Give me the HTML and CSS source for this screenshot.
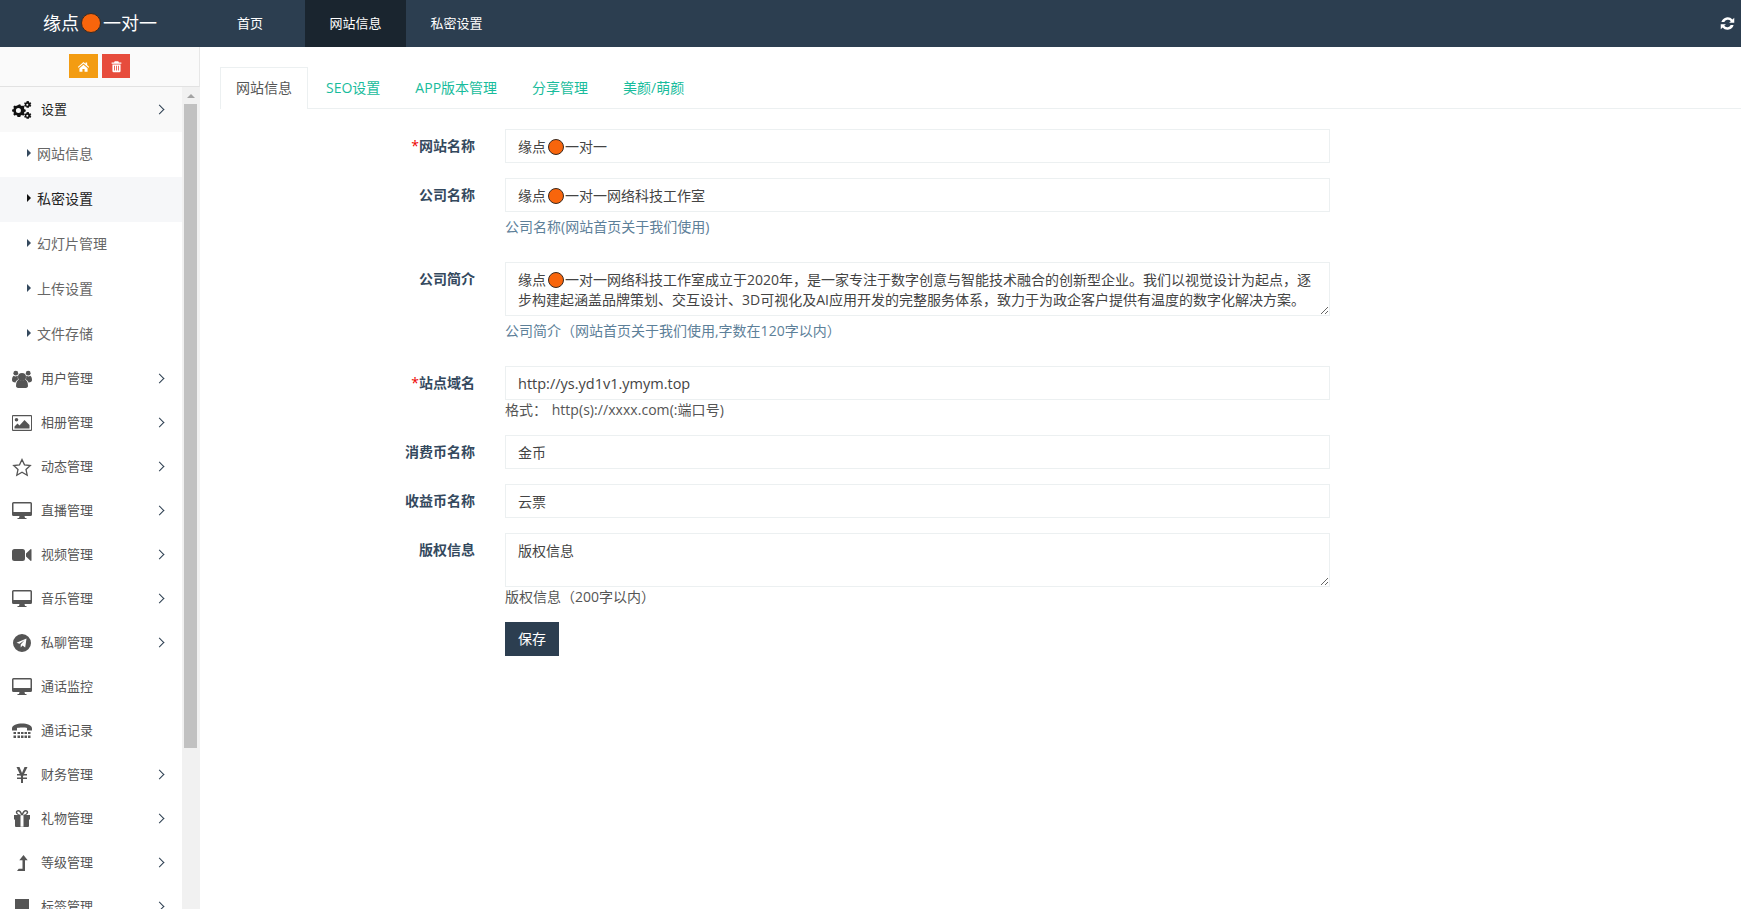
FILE: index.html
```html
<!DOCTYPE html>
<html lang="zh-CN">
<head>
<meta charset="utf-8">
<title>网站信息</title>
<link rel="stylesheet" href="styles.css">
</head>
<body>
<svg class="defs" aria-hidden="true">
  <defs>
    <symbol id="i-desktop" viewBox="0 0 20 18"><path fill-rule="evenodd" d="M1.500 0h17A1.500 1.500 0 0 1 20 1.500v11a1.500 1.500 0 0 1-1.500 1.500H12.500l.5 2h1.500v1h-9v-1H7l.5-2H1.500A1.500 1.500 0 0 1 0 12.500v-11A1.500 1.500 0 0 1 1.500 0zM1.500 1.500v8.500h17V1.500z"/></symbol>
  </defs>
</svg>
<header class="topbar">
  <div class="brand">缘点<span class="dot dot-lg"></span>一对一</div>
  <nav class="topnav">
    <a class="topnav-item">首页</a>
    <a class="topnav-item is-active">网站信息</a>
    <a class="topnav-item">私密设置</a>
  </nav>
  <svg class="refresh" viewBox="0 0 16 16"><path d="M14.500 9.500a6.800 6.800 0 0 1-11.800 2.800L.8 14.200V8.700h5.500L4.500 10.500a4 4 0 0 0 6.900-1zM1.500 6.500a6.800 6.800 0 0 1 11.800-2.800L15.200 1.800v5.500H9.700l1.800-1.800a4 4 0 0 0-6.900 1z"/></svg>
</header>
<div class="shell">
  <aside class="sidebar">
    <div class="tools">
      <button class="tool tool-home"><svg viewBox="0 0 16 16"><path d="M8 2.500 1 8.500l.8 1L8 4.300l6.200 5.200.8-1-2.500-2.200V3h-2v1.600zM3 10v4.500h3.700v-3.300h2.600v3.300H13V10L8 5.800z"/></svg></button>
      <button class="tool tool-del"><svg viewBox="0 0 16 16"><path fill-rule="evenodd" d="M5.800 1.500h4.400l.8 1.500H14v1.500H2V3h3zM3 5.500h10v8A1.500 1.500 0 0 1 11.500 15h-7A1.500 1.500 0 0 1 3 13.500zM5 7v6h1V7zm2.500 0v6h1V7zM10 7v6h1V7z"/></svg></button>
    </div>
    <div class="sidebar-body">
      <ul class="menu">
        <li class="menu-item is-open">
          <svg class="ico" viewBox="0 0 20 18"><path fill-rule="evenodd" d="M6 4.500l1.200-.3.500 1.300 1.300.6 1.200-.6 1.300 1.300-.6 1.200.5 1.300 1.300.4v1.800l-1.300.4-.5 1.300.6 1.200-1.300 1.300-1.200-.6-1.300.5-.4 1.300H4.500l-.4-1.300-1.300-.5-1.200.6L.3 14.300l.6-1.200-.5-1.300L-.9 11.400V9.600l1.300-.4.5-1.300-.6-1.200 1.300-1.300 1.200.6 1.300-.5zM5.400 8a2.500 2.500 0 1 0 0 5 2.500 2.500 0 0 0 0-5z" transform="translate(1 -1)"/><path fill-rule="evenodd" d="M16 0l.9.3.1 1 .7.4.9-.4.700 1.200-.7.600v.9l.7.600-.7 1.200-.9-.4-.7.400-.1 1H14.500l-.1-1-.7-.4-.9.400-.7-1.200.7-.6v-.9l-.7-.6.700-1.200.9.4.7-.4.1-1zM15.300 2.700a1 1 0 1 0 0 2 1 1 0 0 0 0-2zM16 11l.9.3.1 1 .7.4.9-.4.700 1.200-.7.600v.9l.7.600-.7 1.200-.9-.4-.7.400-.1 1H14.500l-.1-1-.7-.4-.9.400-.7-1.200.7-.6v-.9l-.7-.6.700-1.200.9.4.7-.4.1-1zM15.300 13.700a1 1 0 1 0 0 2 1 1 0 0 0 0-2z"/></svg>
          <span class="menu-label">设置</span><i class="chev"></i>
        </li>
        <li class="sub-item"><i class="tri"></i>网站信息</li>
        <li class="sub-item is-current"><i class="tri"></i>私密设置</li>
        <li class="sub-item"><i class="tri"></i>幻灯片管理</li>
        <li class="sub-item"><i class="tri"></i>上传设置</li>
        <li class="sub-item"><i class="tri"></i>文件存储</li>
        <li class="menu-item">
          <svg class="ico" viewBox="0 0 20 18"><circle cx="10" cy="7" r="4"/><path d="M4 16c0-4 1.500-6 3-6.500a4.500 4.500 0 0 0 6 0c1.500.5 3 2.500 3 6.500 0 1.500-1.500 2-3 2H7c-1.500 0-3-.5-3-2z"/><circle cx="3.800" cy="3.200" r="2.400"/><circle cx="16.200" cy="3.200" r="2.400"/><path d="M0 10c0-2.500 1-4 1.800-4.200a3 3 0 0 0 3.400 0l.7.400a5 5 0 0 0 .3 3.300C5 10 3.800 11 3.500 12.500 1 12.500 0 11.500 0 10zM20 10c0-2.500-1-4-1.800-4.200a3 3 0 0 1-3.400 0l-.7.400a5 5 0 0 1-.3 3.300c1.200.5 2.400 1.500 2.700 3 2.500 0 3.500-1 3.500-2.500z"/></svg>
          <span class="menu-label">用户管理</span><i class="chev"></i>
        </li>
        <li class="menu-item">
          <svg class="ico" viewBox="0 0 20 16"><path fill-rule="evenodd" d="M1 0h18a1 1 0 0 1 1 1v14a1 1 0 0 1-1 1H1a1 1 0 0 1-1-1V1a1 1 0 0 1 1-1zM1 1.200v13.600h18V1.200zM4.500 3a1.800 1.800 0 1 1 0 3.600 1.800 1.800 0 0 1 0-3.600zM2.500 13.500v-2l3-3 2 2 5-5.500 5 5v3.500z"/></svg>
          <span class="menu-label">相册管理</span><i class="chev"></i>
        </li>
        <li class="menu-item">
          <svg class="ico" viewBox="0 0 20 18"><path fill="none" stroke="#555" stroke-width="1.300" d="M10 1.500l2.500 5.300 5.800.7-4.300 4 1.200 5.700-5.200-2.900-5.200 2.900 1.200-5.700-4.300-4 5.800-.7z"/></svg>
          <span class="menu-label">动态管理</span><i class="chev"></i>
        </li>
        <li class="menu-item">
          <svg class="ico"><use href="#i-desktop"/></svg>
          <span class="menu-label">直播管理</span><i class="chev"></i>
        </li>
        <li class="menu-item">
          <svg class="ico" viewBox="0 0 20 14"><path d="M2.500 1h8A2.500 2.500 0 0 1 13 3.500v7a2.500 2.500 0 0 1-2.500 2.500h-8A2.500 2.500 0 0 1 0 10.500v-7A2.500 2.500 0 0 1 2.500 1zM14 5.500 18.500 1.300c.5-.4 1-.2 1 .5v10.400c0 .7-.5.900-1 .5L14 8.500z"/></svg>
          <span class="menu-label">视频管理</span><i class="chev"></i>
        </li>
        <li class="menu-item">
          <svg class="ico"><use href="#i-desktop"/></svg>
          <span class="menu-label">音乐管理</span><i class="chev"></i>
        </li>
        <li class="menu-item">
          <svg class="ico" viewBox="0 0 18 18"><path fill-rule="evenodd" d="M9 0a9 9 0 1 1 0 18A9 9 0 0 1 9 0zM13.500 4.500 3.500 8.700l3 1.100 5-3.500-3.800 4.300v3l1.800-2 2.700 2z"/></svg>
          <span class="menu-label">私聊管理</span><i class="chev"></i>
        </li>
        <li class="menu-item">
          <svg class="ico"><use href="#i-desktop"/></svg>
          <span class="menu-label">通话监控</span>
        </li>
        <li class="menu-item">
          <svg class="ico" viewBox="0 0 20 16"><path d="M0 5.500C0 2 5 .5 10 .5S20 2 20 5.500V7.500h-5V5c-1-.8-8.500-.8-10 0v2.500H0zM1.500 9h2.500v2H1.500zM5.500 9H8v2H5.500zM9 9h2.500v2H9zM12.500 9H15v2h-2.500zM16 9h2.500v2H16zM1.500 12.500h2.500v2.500H1.500zM5.500 12.500H8v2.500H5.500zM9 12.500h2.500v2.500H9zM12.500 12.500H15v2.500h-2.500zM16 12.500h2.500v2.500H16z"/></svg>
          <span class="menu-label">通话记录</span>
        </li>
        <li class="menu-item">
          <svg class="ico" viewBox="0 0 20 18"><path d="M4.500 1h3l2.500 6 2.500-6h3l-3.500 7H15v1.500h-3.500l-.5 1V11.500H15V13h-4v4H9v-4H5v-1.500h4v-1l-.5-1H5V8h2.800z"/></svg>
          <span class="menu-label">财务管理</span><i class="chev"></i>
        </li>
        <li class="menu-item">
          <svg class="ico" viewBox="0 0 20 18"><path fill-rule="evenodd" d="M2 5h5c-2-.3-3.200-1.500-3.200-2.800C3.800 1 4.800 0 6.200 0 8 0 9.400 1.800 10 3.400 10.600 1.800 12 0 13.800 0c1.400 0 2.400 1 2.400 2.200C16.200 3.500 15 4.700 13 5h5v4.500h-1V16a1 1 0 0 1-1 1H4a1 1 0 0 1-1-1V9.500H2zM6.200 1.500c-.6 0-1 .3-1 .8 0 1 1.500 2.500 3.800 2.700C8.500 3.500 7.500 1.500 6.200 1.500zM13.800 1.500c-1.300 0-2.300 2-2.800 3.500 2.300-.2 3.800-1.700 3.800-2.700 0-.5-.4-.8-1-.8zM8.500 5.200v11.500h3V5.200z"/></svg>
          <span class="menu-label">礼物管理</span><i class="chev"></i>
        </li>
        <li class="menu-item">
          <svg class="ico" viewBox="0 0 20 18"><path d="M11.500 1l4.200 5.300h-2.700V17H5l1.700-2.200h3.800V6.300H7.300z"/></svg>
          <span class="menu-label">等级管理</span><i class="chev"></i>
        </li>
        <li class="menu-item">
          <svg class="ico" viewBox="0 0 20 18"><rect x="3" y="1" width="14" height="14"/></svg>
          <span class="menu-label">标签管理</span><i class="chev"></i>
        </li>
      </ul>
      <div class="scrollbar" aria-hidden="true">
        <span class="scroll-up"></span>
        <span class="scroll-thumb"></span>
      </div>
    </div>
  </aside>
  <main class="content">
    <ul class="tabs">
      <li class="tab is-active">网站信息</li>
      <li class="tab">SEO设置</li>
      <li class="tab">APP版本管理</li>
      <li class="tab">分享管理</li>
      <li class="tab">美颜/萌颜</li>
    </ul>
    <form class="form">
      <div class="row">
        <label class="label"><b class="req">*</b>网站名称</label>
        <div class="control"><div class="input">缘点<span class="dot"></span>一对一</div></div>
      </div>
      <div class="row">
        <label class="label">公司名称</label>
        <div class="control">
          <div class="input">缘点<span class="dot"></span>一对一网络科技工作室</div>
          <p class="help help-info">公司名称(网站首页关于我们使用)</p>
        </div>
      </div>
      <div class="row">
        <label class="label">公司简介</label>
        <div class="control">
          <div class="input textarea">缘点<span class="dot"></span>一对一网络科技工作室成立于2020年，是一家专注于数字创意与智能技术融合的创新型企业。我们以视觉设计为起点，逐步构建起涵盖品牌策划、交互设计、3D可视化及AI应用开发的完整服务体系，致力于为政企客户提供有温度的数字化解决方案。</div>
          <p class="help help-info">公司简介（网站首页关于我们使用,字数在120字以内）</p>
        </div>
      </div>
      <div class="row">
        <label class="label"><b class="req">*</b>站点域名</label>
        <div class="control">
          <div class="input input-latin">http://ys.yd1v1.ymym.top</div>
          <p class="help">格式： <span class="help-url">http(s)://xxxx.com(:端口号)</span></p>
        </div>
      </div>
      <div class="row">
        <label class="label">消费币名称</label>
        <div class="control"><div class="input">金币</div></div>
      </div>
      <div class="row">
        <label class="label">收益币名称</label>
        <div class="control"><div class="input">云票</div></div>
      </div>
      <div class="row">
        <label class="label">版权信息</label>
        <div class="control">
          <div class="input textarea">版权信息</div>
          <p class="help">版权信息（200字以内）</p>
        </div>
      </div>
      <div class="row">
        <div class="label"></div>
        <div class="control"><button type="button" class="save">保存</button></div>
      </div>
    </form>
  </main>
</div>
</body>
</html>
```
FILE: styles.css
```css
* { box-sizing: border-box; }
html, body { margin: 0; height: 100%; overflow: hidden; }
body {
  font: 14px/20px "Open Sans", "Noto Sans CJK SC", sans-serif;
  color: #2c3e50;
  background: #fff;
}
.defs { position: absolute; width: 0; height: 0; }
.topbar {
  display: flex;
  align-items: center;
  height: 47px;
  background: #2c3e50;
  color: #fff;
}
.brand {
  width: 200px;
  padding-bottom: 1px;
  display: flex;
  align-items: center;
  justify-content: center;
  font-size: 18px;
}
.dot {
  display: inline-block;
  width: 16px;
  height: 16px;
  margin: 0 1.500px;
  border-radius: 50%;
  background: #f8650c;
  border: 1px solid #3a2a20;
  vertical-align: -3px;
}
.dot-lg { width: 20px; height: 20px; margin: 0 2px; }
.topnav { display: flex; height: 100%; margin-left: 5px; font-size: 13px; }
.topnav-item {
  display: flex;
  align-items: center;
  justify-content: center;
  width: 101px;
  height: 100%;
  padding-bottom: 2px;
  white-space: nowrap;
}
.topnav-item:first-child { width: 100px; padding-right: 10px; }
.topnav-item.is-active { background: #1a252f; }
.refresh { width: 15px; height: 15px; fill: #fff; margin-left: auto; margin-right: 6px; }

.shell { display: flex; height: 873px; }
.sidebar {
  width: 200px;
  flex: none;
  height: 862px;
  display: flex;
  flex-direction: column;
}
.tools {
  height: 40px;
  flex: none;
  display: flex;
  justify-content: center;
  gap: 4px;
  padding: 7px 0 0;
  background: #fafafa;
  border-bottom: 1px solid #e2e2e2;
  border-right: 1px solid #e7e7e7;
}
.tool {
  width: 29px;
  height: 24px;
  padding: 0;
  border: 0;
  display: flex;
  align-items: center;
  justify-content: center;
}
.tool svg { width: 13px; height: 13px; fill: #fff; }
.tool-home { background: #f39c12; }
.tool-del { background: #e74c3c; width: 28px; }
.sidebar-body { flex: 1; min-height: 0; display: flex; }
.menu {
  list-style: none;
  margin: 0;
  padding: 0;
  width: 182px;
  flex: none;
  overflow: hidden;
  background: #fff;
}
.scrollbar {
  width: 18px;
  flex: none;
  padding: 0 3px 0 2px;
  background: #f1f1f1;
}
.scroll-up {
  display: block;
  width: 13px;
  height: 17px;
  padding-top: 7px;
}
.scroll-up::before {
  content: "";
  display: block;
  width: 0;
  height: 0;
  margin: 0 auto;
  border-left: 4px solid transparent;
  border-right: 4px solid transparent;
  border-bottom: 4px solid #a3a3a3;
}
.scroll-thumb { display: block; height: 644px; background: #c1c1c1; }

.menu-item, .sub-item { background: #fff; position: relative; }
.menu-item {
  display: flex;
  align-items: center;
  height: 44px;
  padding-left: 12px;
  color: #555;
  font-size: 13px;
}
.menu-item.is-open { height: 45px; background: #f9f9f9; color: #222; }
.menu-item.is-open .ico { fill: #111; }
.ico { width: 20px; height: 18px; fill: #555; flex: none; overflow: visible; }
.menu-label { margin-left: 9px; padding-bottom: 2px; }
.chev {
  position: absolute;
  right: 19px;
  top: 50%;
  width: 7px;
  height: 7px;
  margin-top: -4px;
  border-top: 1px solid #2c3e50;
  border-right: 1px solid #2c3e50;
  transform: rotate(45deg);
}
.sub-item {
  display: flex;
  align-items: center;
  height: 45px;
  padding: 0 0 2px 27px;
  color: #666;
}
.sub-item.is-current { background: #f6f7f9; color: #222; }
.tri {
  width: 0;
  height: 0;
  margin-right: 6px;
  margin-top: -1px;
  border-left: 4px solid #34495e;
  border-top: 4px solid transparent;
  border-bottom: 4px solid transparent;
}
.sub-item.is-current .tri { border-left-color: #111; }

.content { flex: 1; padding: 20px 0 0 20px; min-width: 0; }
.tabs {
  list-style: none;
  margin: 0;
  padding: 0;
  display: flex;
  height: 42px;
  border-bottom: 1px solid #ecf0f1;
}
.tab {
  padding: 10px 15px 0;
  height: 42px;
  margin-right: 3px;
  color: #18bc9c;
  border: 1px solid transparent;
  border-bottom: 0;
}
.tab.is-active {
  background: #fff;
  color: #555;
  border-color: #ecf0f1;
  margin-right: 2px;
}
.form { padding-top: 20px; width: 1110px; }
.row { display: flex; margin-bottom: 15px; }
.label {
  width: 255px;
  flex: none;
  padding-top: 7px;
  font-weight: 700;
  text-align: right;
  color: #34495e;
  margin-right: 30px;
}
.req { color: #e00; font-weight: 400; }
.control { flex: 1; min-width: 0; }
.input {
  height: 34px;
  padding: 7px 12px;
  border: 1px solid #ecf0f1;
  color: #444;
  white-space: nowrap;
}
.input-latin { font-size: 14.500px; }
.textarea {
  height: 54px;
  white-space: normal;
  resize: vertical;
  overflow: auto;
}
.help { margin: 0; min-height: 20px; color: #555; }
.help-url { margin-left: 1px; letter-spacing: 0.050px; }
.help-info { margin: 5px 0 10px; color: #5d8099; }
.save {
  width: 54px;
  height: 34px;
  padding: 0;
  border: 0;
  background: #2c3e50;
  color: #fff;
  font: inherit;
}
```
